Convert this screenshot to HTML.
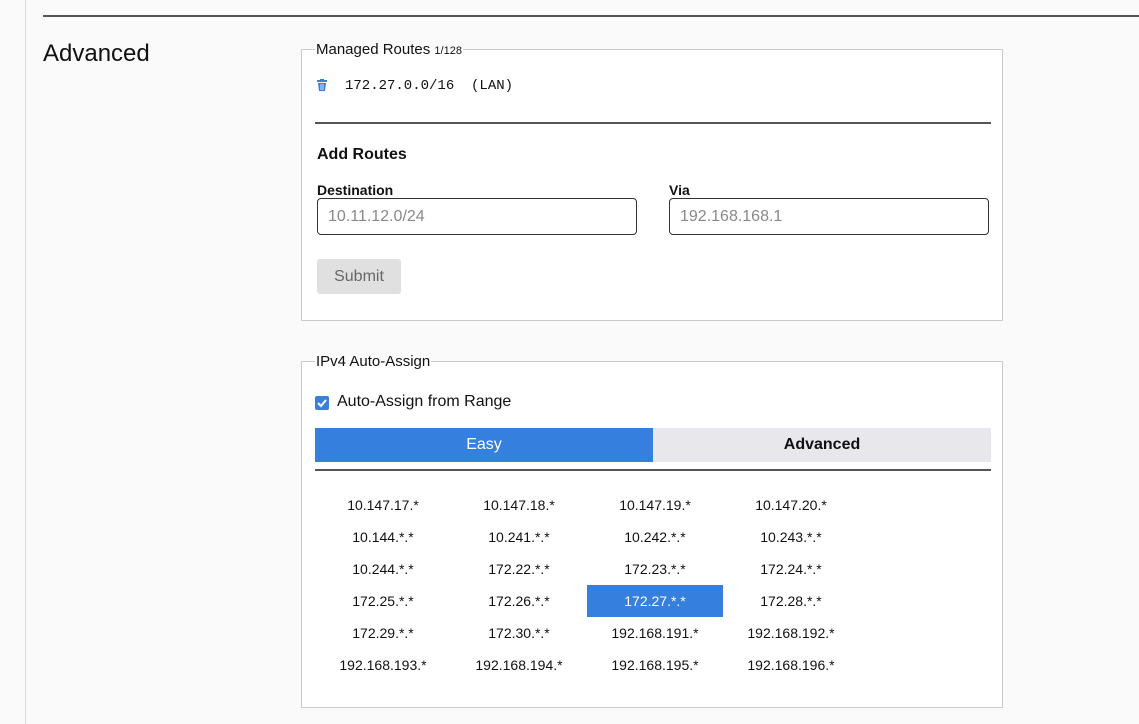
<!DOCTYPE html>
<html><head><style>
body{margin:0;width:1139px;height:724px;background:#fafafa;font-family:"Liberation Sans","DejaVu Sans",sans-serif;color:#111;position:relative;overflow:hidden}
.vl{position:absolute;left:25px;top:0;width:1px;height:724px;background:#ddd}
.hr{position:absolute;left:43px;top:15px;width:1096px;height:2px;background:#555}
h2{position:absolute;left:43px;top:40px;margin:0;font-weight:normal;font-size:24px}
fieldset{position:absolute;left:301px;width:702px;background:#fff;border:1px solid #ccc;margin:0;padding:0;box-sizing:border-box}
legend{font-size:15px;margin-left:13px;padding:0 1px}
.abs{position:absolute}
input{position:absolute;border:1px solid #333;border-radius:4px;height:37px;width:320px;box-sizing:border-box;font-size:16px;padding-left:10px;color:#888;font-family:inherit}
.cell{position:absolute;width:136px;height:32px;line-height:32px;text-align:center;font-size:14px}
</style></head><body>
<div class="vl"></div><div class="hr"></div>
<h2>Advanced</h2>
<fieldset style="top:41px;height:280px">
<legend>Managed Routes <span style="font-size:11px">1/128</span></legend>
</fieldset>
<svg class="abs" style="left:317px;top:79px" width="10" height="12" viewBox="0 0 10 12"><rect x="0" y="1" width="10" height="2" fill="#3a7fd8"/><rect x="3" y="0" width="4" height="1" fill="#3a7fd8"/><path d="M1 4h8l-1 8H2z" fill="#3a7fd8"/><path d="M4 5v6M6 5v6" stroke="#fff" stroke-width=".8"/></svg>
<div class="abs" style="left:345px;top:78px;font-family:'Liberation Mono',monospace;font-size:14px;white-space:pre">172.27.0.0/16  (LAN)</div>
<div class="abs" style="left:315px;top:122px;width:676px;height:2px;background:#555"></div>
<div class="abs" style="left:317px;top:146px;font-size:16px;font-weight:bold">Add Routes</div>
<div class="abs" style="left:317px;top:182px;font-size:14px;font-weight:bold">Destination</div>
<div class="abs" style="left:669px;top:182px;font-size:14px;font-weight:bold">Via</div>
<input style="left:317px;top:198px" value="10.11.12.0/24">
<input style="left:669px;top:198px" value="192.168.168.1">
<div class="abs" style="left:317px;top:259px;width:84px;height:35px;background:#e0e0e0;border-radius:3px;color:#666;font-size:16px;text-align:center;line-height:35px">Submit</div>
<fieldset style="top:353px;height:355px">
<legend>IPv4 Auto-Assign</legend>
</fieldset>
<div class="abs" style="left:315px;top:396px;width:14px;height:14px;background:#3a7fd8;border-radius:2px"><svg width="14" height="14"><path d="M3 7l3 3 5-6" stroke="#fff" stroke-width="2" fill="none"/></svg></div>
<div class="abs" style="left:337px;top:393px;font-size:16px">Auto-Assign from Range</div>
<div class="abs" style="left:315px;top:428px;width:338px;height:34px;background:#3580de;color:#fff;text-align:center;line-height:34px;font-size:16px">Easy</div>
<div class="abs" style="left:653px;top:428px;width:338px;height:34px;background:#e8e8ec;text-align:center;line-height:34px;font-size:16px;font-weight:bold">Advanced</div>
<div class="abs" style="left:315px;top:469px;width:676px;height:2px;background:#555"></div>
<div class="cell" style="left:587px;top:585px;background:#3580de"></div>
<div id="g"></div>
<script>
var d=["10.147.17.*","10.147.18.*","10.147.19.*","10.147.20.*","10.144.*.*","10.241.*.*","10.242.*.*","10.243.*.*","10.244.*.*","172.22.*.*","172.23.*.*","172.24.*.*","172.25.*.*","172.26.*.*","172.27.*.*","172.28.*.*","172.29.*.*","172.30.*.*","192.168.191.*","192.168.192.*","192.168.193.*","192.168.194.*","192.168.195.*","192.168.196.*"],h="";
d.forEach(function(t,i){var c=i%4,r=(i/4)|0;h+='<div class="cell" style="left:'+(315+c*136)+'px;top:'+(489+r*32)+'px;'+(i==14?'color:#fff':'')+'">'+t+'</div>'});
document.getElementById('g').innerHTML=h;
</script>
</body></html>
